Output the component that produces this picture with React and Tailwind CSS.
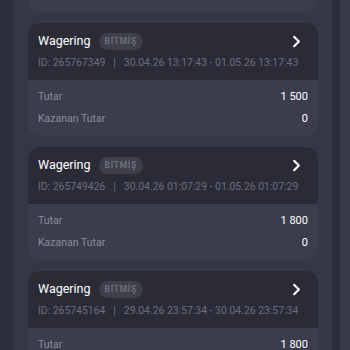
import { ChevronRight } from "lucide-react";

const bonuses = [
  { id: "265767349", from: "30.04.26 13:17:43", to: "01.05.26 13:17:43", amount: "1 500", won: "0" },
  { id: "265749426", from: "30.04.26 01:07:29", to: "01.05.26 01:07:29", amount: "1 800", won: "0" },
  { id: "265745164", from: "29.04.26 23:57:34", to: "30.04.26 23:57:34", amount: "1 800", won: "0" },
];

const BonusCard = ({ bonus }) => (
  <div className="rounded-xl overflow-hidden shrink-0">
    {/* Header */}
    <div className="bg-[#2a2b37] px-[10px] pt-2 pb-[9px]">
      <div className="flex items-center h-5">
        <span className="text-[12.5px] text-white leading-5">Wagering</span>
        <span className="ml-2 h-[17px] px-[6px] rounded-full bg-[#3e3f4b] text-[#6d6f7c] text-[8.5px] font-bold tracking-[0.08em] flex items-center">
          BİTMİŞ
        </span>
        <ChevronRight className="ml-auto mr-[2px] text-white" size={19} strokeWidth={2.6} />
      </div>
      <div className="mt-1 h-4 text-[10.4px] leading-4 text-[#6c6e7c] whitespace-nowrap">
        ID: {bonus.id}
        <span className="mx-[8px]">|</span>
        {bonus.from} - {bonus.to}
      </div>
    </div>

    {/* Body */}
    <div className="bg-[#3b3c4c] px-[10px] pt-[6px] pb-[6px]">
      <div className="flex justify-between items-center h-[22px]">
        <span className="text-[10.5px] text-[#8b8d9b]">Tutar</span>
        <span className="text-[11px] text-white">{bonus.amount}</span>
      </div>
      <div className="flex justify-between items-center h-[22px]">
        <span className="text-[10.5px] text-[#8b8d9b]">Kazanan Tutar</span>
        <span className="text-[11px] text-white">{bonus.won}</span>
      </div>
    </div>
  </div>
);

export default function App() {
  return (
    <div className="w-[350px] h-[350px] overflow-hidden flex bg-[#2d2e3c] font-['Roboto',sans-serif]">
      <div className="w-[14px] shrink-0" />
      <div className="w-[318px] shrink-0 bg-[#363746] px-[14px] flex flex-col gap-[11px]">
        {/* tail of previous card */}
        <div className="h-[12px] shrink-0 bg-[#3b3c4c] rounded-b-xl" />
        {bonuses.map((b) => (
          <BonusCard key={b.id} bonus={b} />
        ))}
      </div>
      <div className="w-[8px] shrink-0 bg-[#2c2d3a]" />
      <div className="flex-1 bg-[#393a47]" />
    </div>
  );
}
